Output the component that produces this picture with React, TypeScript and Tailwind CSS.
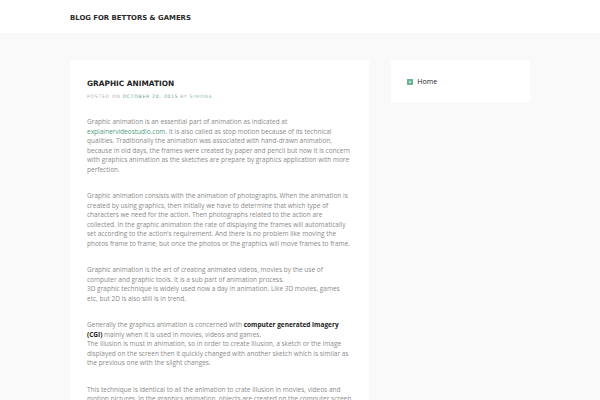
export default function App() {
  const body = "font-['Open_Sans',sans-serif] text-[6.5px] leading-[9.5px] text-[#8a8a8a]";
  return (
    <div className="min-h-[400px] w-[600px] overflow-hidden bg-[#f9f9f9] font-['DejaVu_Sans',sans-serif]">
      <header className="h-[33px] bg-white">
        <div className="ml-[70px] pt-[13px] text-[6.9px] font-bold text-[#2a2a2a]">
          BLOG FOR BETTORS &amp; GAMERS
        </div>
      </header>

      <div className="mx-[70px] mt-[27px] flex items-start gap-[22px]">
        <main className="w-[300px] bg-white px-[17px] pt-[18px] pb-4">
          <h1 className="text-[7.4px] font-bold leading-[11px] text-[#1f1f1f]">
            GRAPHIC ANIMATION
          </h1>
          <p className="mt-[5px] text-[4.6px] uppercase leading-[6px] tracking-[0.7px] text-[#b0b0b0]">
            Posted on <span className="text-[#5fa58a]">October 20, 2015</span> by{" "}
            <span className="text-[#8cc4ae]">Simona</span>
          </p>

          <div className={`mt-[17px] ${body}`}>
            <p className="mb-[17px]">
              Graphic animation is an essential part of animation as indicated at{" "}
              <span className="text-[#4f9a7d]">explainervideostudio.com</span>. It is also called as stop motion because of its technical
              qualities. Traditionally the animation was associated with hand-drawn animation,
              because in old days, the frames were created by paper and pencil but now it is concern
              with graphics animation as the sketches are prepare by graphics application with more
              perfection.
            </p>
            <p className="mb-[17px]">
              Graphic animation consists with the animation of photographs. When the animation is
              created by using graphics, then initially we have to determine that which type of
              characters we need for the action. Then photographs related to the action are
              collected. In the graphic animation the rate of displaying the frames will automatically
              set according to the action's requirement. And there is no problem like moving the
              photos frame to frame, but once the photos or the graphics will move frames to frame.
            </p>
            <p className="mb-[17px]">
              Graphic animation is the art of creating animated videos, movies by the use of
              computer and graphic tools. It is a sub part of animation process.
              <br />
              3D graphic technique is widely used now a day in animation. Like 3D movies, games
              <br />
              etc, but 2D is also still is in trend.
            </p>
            <p className="mb-[17px]">
              Generally the graphics animation is concerned with{" "}
              <b className="text-[#222]">computer generated imagery (CGI)</b> mainly when it is used in movies, videos and games.
              <br />
              The illusion is must in animation, so in order to create illusion, a sketch or the image
              displayed on the screen then it quickly changed with another sketch which is similar as
              the previous one with the slight changes.
            </p>
            <p>
              This technique is identical to all the animation to crate illusion in movies, videos and
              motion pictures. In the graphics animation, objects are created on the computer screen
              and then they are moved frame by frame.
            </p>
          </div>
        </main>

        <aside className="w-[139px] bg-white px-[16px] pt-[17px] pb-[16px]">
          <div className="flex items-center gap-[4px]">
            <span className="flex h-[6px] w-[6px] items-center justify-center bg-[#6bb394]">
              <span className="h-[2px] w-[2px] bg-white/60" />
            </span>
            <span className="font-['Open_Sans',sans-serif] text-[7px] leading-[9px] text-[#222]">Home</span>
          </div>
        </aside>
      </div>
    </div>
  );
}
